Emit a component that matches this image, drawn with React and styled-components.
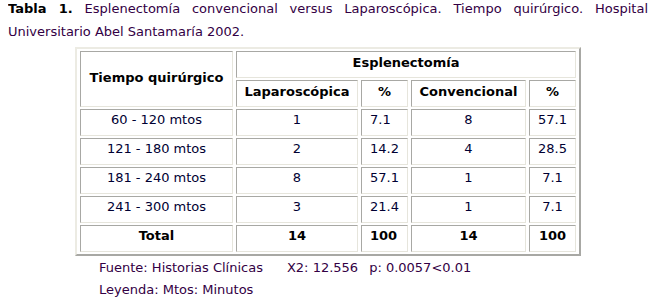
import React from 'react';
import styled, { createGlobalStyle } from 'styled-components';

const GlobalStyle = createGlobalStyle`
  body {
    margin: 0 8px;
    background: #ffffff;
    font-family: "DejaVu Sans", Verdana, sans-serif;
    font-size: 13px;
  }
`;

const rows = [
  ['60 - 120 mtos', '1', '7.1', '8', '57.1'],
  ['121 - 180 mtos', '2', '14.2', '4', '28.5'],
  ['181 - 240 mtos', '8', '57.1', '1', '7.1'],
  ['241 - 300 mtos', '3', '21.4', '1', '7.1'],
];

const App = () => (
  <Page>
    <GlobalStyle />
    <Caption>
      <Lead>Tabla 1.</Lead> Esplenectomía convencional versus Laparoscópica. Tiempo quirúrgico. Hospital
      Universitario Abel Santamaría 2002.
    </Caption>
    <DataTable>
      <colgroup>
        <col style={{ width: 153 }} />
        <col style={{ width: 122 }} />
        <col style={{ width: 47 }} />
        <col style={{ width: 115 }} />
        <col style={{ width: 47 }} />
      </colgroup>
      <thead>
        <tr>
          <Head rowSpan={2}>Tiempo quirúrgico</Head>
          <Head colSpan={4}>Esplenectomía</Head>
        </tr>
        <tr>
          <Head>Laparoscópica</Head>
          <Head>%</Head>
          <Head>Convencional</Head>
          <Head>%</Head>
        </tr>
      </thead>
      <tbody>
        {rows.map((r) => (
          <tr key={r[0]}>
            <Cell>{r[0]}</Cell>
            <Cell>{r[1]}</Cell>
            <Cell $left>{r[2]}</Cell>
            <Cell>{r[3]}</Cell>
            <Cell>{r[4]}</Cell>
          </tr>
        ))}
        <tr>
          <Cell $bold>Total</Cell>
          <Cell $bold>14</Cell>
          <Cell $bold $left>100</Cell>
          <Cell $bold>14</Cell>
          <Cell $bold>100</Cell>
        </tr>
      </tbody>
    </DataTable>
    <Notes>
      <Note>
        <NoteItem>Fuente: Historias Clínicas</NoteItem>
        <NoteItem $gap={24}>X2: 12.556</NoteItem>
        <NoteItem $gap={11}>p: 0.0057&lt;0.01</NoteItem>
      </Note>
      <Note>
        <NoteItem>Leyenda: Mtos: Minutos</NoteItem>
      </Note>
    </Notes>
  </Page>
);

export default App;

//Page
const Page = styled.div`
  color: #330044;
`;

//Caption above the table
const Caption = styled.p`
  margin: -3px 0 0;
  line-height: 23px;
  text-align: justify;
`;

const Lead = styled.b`
  color: #000;
`;

//Table
const DataTable = styled.table`
  width: 506px;
  margin: 4px auto 0;
  table-layout: fixed;
  border-collapse: separate;
  border-spacing: 3px 2px;
  border: 2px solid;
  border-color: #ecebe3 #a8a8a4 #a8a8a4 #ecebe3;
  color: #000033;
`;

const Head = styled.th`
  box-sizing: border-box;
  height: 27px;
  padding: 0 4px 4px;
  border: 1px solid;
  border-color: #a8a8a4 #e6e5dc #e6e5dc #a8a8a4;
  font-weight: bold;
  color: #000;
  text-align: center;
`;

const Cell = styled.td`
  box-sizing: border-box;
  height: 27px;
  padding: 0 4px 6px ${(p) => (p.$left ? '8px' : '4px')};
  border: 1px solid;
  border-color: #a8a8a4 #e6e5dc #e6e5dc #a8a8a4;
  text-align: ${(p) => (p.$left ? 'left' : 'center')};
  font-weight: ${(p) => (p.$bold ? 'bold' : 'normal')};
  color: ${(p) => (p.$bold ? '#000' : 'inherit')};
`;

//Notes under the table
const Notes = styled.div`
  margin: 1px 0 0 91px;
`;

const Note = styled.div`
  display: flex;
  line-height: 22px;
`;

const NoteItem = styled.span`
  margin-left: ${(p) => p.$gap || 0}px;
  white-space: nowrap;
`;
